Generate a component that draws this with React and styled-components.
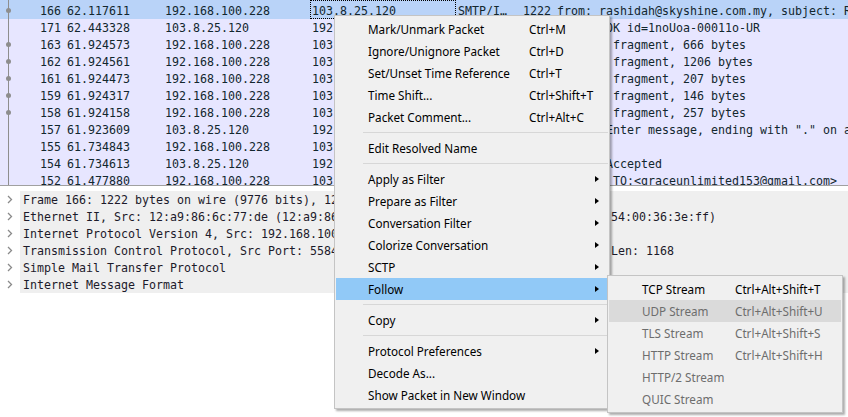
import React from "react";
import styled, { createGlobalStyle } from "styled-components";

const GlobalStyle = createGlobalStyle`
  html, body {
    margin: 0;
    padding: 0;
    background: #ffffff;
    overflow: hidden;
  }
  #root {
    width: 848px;
    height: 417px;
  }
`;

const packets = [
  { no: 166, time: "62.117611", src: "192.168.100.228", dst: "103.8.25.120", proto: "SMTP/I…", len: 1222, info: "from: rashidah@skyshine.com.my, subject: RE: Payment Advice, (text/html)", dot: true, selected: true },
  { no: 171, time: "62.443328", src: "103.8.25.120", dst: "192.168.100.228", proto: "SMTP", len: 101, info: "S: 250 OK id=1noUoa-00011o-UR" },
  { no: 163, time: "61.924573", src: "192.168.100.228", dst: "103.8.25.120", proto: "SMTP", len: 720, info: "C: DATA fragment, 666 bytes", dot: true },
  { no: 162, time: "61.924561", src: "192.168.100.228", dst: "103.8.25.120", proto: "SMTP", len: 1260, info: "C: DATA fragment, 1206 bytes", dot: true },
  { no: 161, time: "61.924473", src: "192.168.100.228", dst: "103.8.25.120", proto: "SMTP", len: 261, info: "C: DATA fragment, 207 bytes", dot: true },
  { no: 159, time: "61.924317", src: "192.168.100.228", dst: "103.8.25.120", proto: "SMTP", len: 200, info: "C: DATA fragment, 146 bytes", dot: true },
  { no: 158, time: "61.924158", src: "192.168.100.228", dst: "103.8.25.120", proto: "SMTP", len: 311, info: "C: DATA fragment, 257 bytes", dot: true },
  { no: 157, time: "61.923609", src: "103.8.25.120", dst: "192.168.100.228", proto: "SMTP", len: 91, info: 'S: 354 Enter message, ending with "." on a line by itself' },
  { no: 155, time: "61.734843", src: "192.168.100.228", dst: "103.8.25.120", proto: "SMTP", len: 60, info: "C: DATA" },
  { no: 154, time: "61.734613", src: "103.8.25.120", dst: "192.168.100.228", proto: "SMTP", len: 70, info: "S: 250 Accepted" },
  { no: 152, time: "61.477880", src: "192.168.100.228", dst: "103.8.25.120", proto: "SMTP", len: 100, info: "C: RCPT TO:<graceunlimited153@gmail.com>" },
];

const details = [
  "Frame 166: 1222 bytes on wire (9776 bits), 1222 bytes captured (9776 bits)",
  "Ethernet II, Src: 12:a9:86:6c:77:de (12:a9:86:6c:77:de), Dst: 52:54:00:36:3e:ff (52:54:00:36:3e:ff)",
  "Internet Protocol Version 4, Src: 192.168.100.228, Dst: 103.8.25.120",
  "Transmission Control Protocol, Src Port: 55842, Dst Port: 587, Seq: 1040, Ack: 512, Len: 1168",
  "Simple Mail Transfer Protocol",
  "Internet Message Format",
];

const mainMenu = [
  { label: "Mark/Unmark Packet", shortcut: "Ctrl+M" },
  { label: "Ignore/Unignore Packet", shortcut: "Ctrl+D" },
  { label: "Set/Unset Time Reference", shortcut: "Ctrl+T" },
  { label: "Time Shift...", shortcut: "Ctrl+Shift+T" },
  { label: "Packet Comment...", shortcut: "Ctrl+Alt+C" },
  { separator: true },
  { label: "Edit Resolved Name" },
  { separator: true },
  { label: "Apply as Filter", sub: true },
  { label: "Prepare as Filter", sub: true },
  { label: "Conversation Filter", sub: true },
  { label: "Colorize Conversation", sub: true },
  { label: "SCTP", sub: true },
  { label: "Follow", sub: true, active: true },
  { separator: true },
  { label: "Copy", sub: true },
  { separator: true },
  { label: "Protocol Preferences", sub: true },
  { label: "Decode As..." },
  { label: "Show Packet in New Window" },
];

const followMenu = [
  { label: "TCP Stream", shortcut: "Ctrl+Alt+Shift+T" },
  { label: "UDP Stream", shortcut: "Ctrl+Alt+Shift+U", disabled: true, hover: true },
  { label: "TLS Stream", shortcut: "Ctrl+Alt+Shift+S", disabled: true },
  { label: "HTTP Stream", shortcut: "Ctrl+Alt+Shift+H", disabled: true },
  { label: "HTTP/2 Stream", disabled: true },
  { label: "QUIC Stream", disabled: true },
];

const Screen = styled.div`
  position: relative;
  width: 848px;
  height: 417px;
  overflow: hidden;
  background: #ffffff;
  font-family: "DejaVu Sans Mono", "Liberation Mono", monospace;
  font-size: 11.63px;
`;

const PacketList = styled.div`
  height: 185px;
  overflow: hidden;
  border-bottom: 1px solid #a0a0a0;
  background: #e7e6ff;
`;

const PacketRow = styled.div`
  display: grid;
  grid-template-columns: 20px 45px 98px 147px 146px 66px 33px 1fr;
  height: ${(p) => (p.$tall ? 19 : 17)}px;
  padding-top: ${(p) => (p.$tall ? 2 : 0)}px;
  box-sizing: border-box;
  align-items: stretch;
  background: ${(p) => (p.$selected ? "#b9d3f8" : "#e7e6ff")};
  color: #12272e;
  white-space: nowrap;
`;

const TreeCell = styled.div`
  position: relative;
  margin-top: ${(p) => (p.$tall ? -2 : 0)}px;

  &::before {
    content: "";
    position: absolute;
    left: 8px;
    top: 0;
    bottom: 0;
    width: 1px;
    background: #8e8e8e;
  }

  &::after {
    content: "";
    display: ${(p) => (p.$dot ? "block" : "none")};
    position: absolute;
    left: 6px;
    top: calc(50% + ${(p) => (p.$tall ? 1 : 0)}px);
    width: 5px;
    height: 5px;
    margin-top: -2.5px;
    border-radius: 50%;
    background: #8e8e8e;
  }
`;

const Cell = styled.div`
  display: flex;
  align-items: center;
  justify-content: ${(p) => (p.$right ? "flex-end" : "flex-start")};
  padding: ${(p) => (p.$right ? "0 4px 0 0" : "0 0 0 2px")};
  overflow: hidden;
  box-sizing: border-box;
  outline: ${(p) => (p.$focus ? "1px dotted #000" : "none")};
  outline-offset: -1px;
  margin-top: ${(p) => (p.$focus ? -2 : 0)}px;
  padding-top: ${(p) => (p.$focus ? 2 : 0)}px;
`;

const DetailsPane = styled.div`
  padding-top: 5px;
`;

const DetailRow = styled.div`
  display: flex;
  height: 17px;
  color: #1c1a2a;
  white-space: nowrap;
`;

const Expander = styled.div`
  width: 20px;
  flex: none;
  display: flex;
  align-items: center;
  padding-left: 7px;
  box-sizing: border-box;
`;

const DetailText = styled.div`
  flex: 1;
  display: flex;
  align-items: center;
  padding-left: 3px;
  background: #efefef;
  overflow: hidden;
`;

const Menu = styled.div`
  position: absolute;
  left: ${(p) => p.$left}px;
  top: ${(p) => p.$top}px;
  width: ${(p) => p.$width}px;
  box-sizing: border-box;
  padding: 2px 1px;
  background: #f0f0f0;
  border: 1px solid #c4c4c4;
  box-shadow: 2px 2px 2px rgba(0, 0, 0, 0.32);
  font-family: "Noto Sans", "Open Sans", sans-serif;
  font-size: 11.7px;
  color: #000000;
`;

const MenuItem = styled.div`
  display: grid;
  grid-template-columns: ${(p) => p.$labelWidth}px 1fr 4px;
  align-items: center;
  height: 22px;
  padding: 0 9px 0 ${(p) => p.$indent}px;
  white-space: nowrap;
  color: ${(p) => (p.$disabled ? "#6d6d6d" : "#000000")};
  background: ${(p) => (p.$active ? "#91c9f7" : p.$hover ? "#dadada" : "transparent")};
`;

const Arrow = styled.span`
  width: 0;
  height: 0;
  border-left: 4px solid #000;
  border-top: 3.5px solid transparent;
  border-bottom: 3.5px solid transparent;
`;

const Separator = styled.div`
  height: 9px;
  display: flex;
  align-items: center;
  padding-left: 27px;

  &::after {
    content: "";
    flex: 1;
    height: 1px;
    background: #d7d7d7;
  }
`;

const Chevron = () => (
  <svg width="6" height="9" viewBox="0 0 6 9">
    <polyline points="1,1 4.5,4.5 1,8" fill="none" stroke="#8a8a8a" strokeWidth="1.3" />
  </svg>
);

const ContextMenu = ({ items, left, top, width, labelWidth, indent }) => (
  <Menu $left={left} $top={top} $width={width}>
    {items.map((item, i) =>
      item.separator ? (
        <Separator key={i} />
      ) : (
        <MenuItem
          key={i}
          $labelWidth={labelWidth}
          $indent={indent}
          $active={item.active}
          $hover={item.hover}
          $disabled={item.disabled}
        >
          <span>{item.label}</span>
          <span>{item.shortcut}</span>
          {item.sub ? <Arrow /> : <span />}
        </MenuItem>
      )
    )}
  </Menu>
);

export default function App() {
  return (
    <>
      <GlobalStyle />
      <Screen>
        <PacketList>
          {packets.map((p, i) => (
            <PacketRow key={p.no} $selected={p.selected} $tall={i === 0}>
              <TreeCell $dot={p.dot} $tall={i === 0} />
              <Cell $right>{p.no}</Cell>
              <Cell>{p.time}</Cell>
              <Cell>{p.src}</Cell>
              <Cell $focus={p.selected}>{p.dst}</Cell>
              <Cell>{p.proto}</Cell>
              <Cell $right>{p.len}</Cell>
              <Cell>{p.info}</Cell>
            </PacketRow>
          ))}
        </PacketList>

        <DetailsPane>
          {details.map((d) => (
            <DetailRow key={d}>
              <Expander>
                <Chevron />
              </Expander>
              <DetailText>{d}</DetailText>
            </DetailRow>
          ))}
        </DetailsPane>

        <ContextMenu items={mainMenu} left={334} top={15} width={276} labelWidth={161} indent={32} />
        <ContextMenu items={followMenu} left={607} top={275} width={236} labelWidth={93} indent={33} />
      </Screen>
    </>
  );
}
